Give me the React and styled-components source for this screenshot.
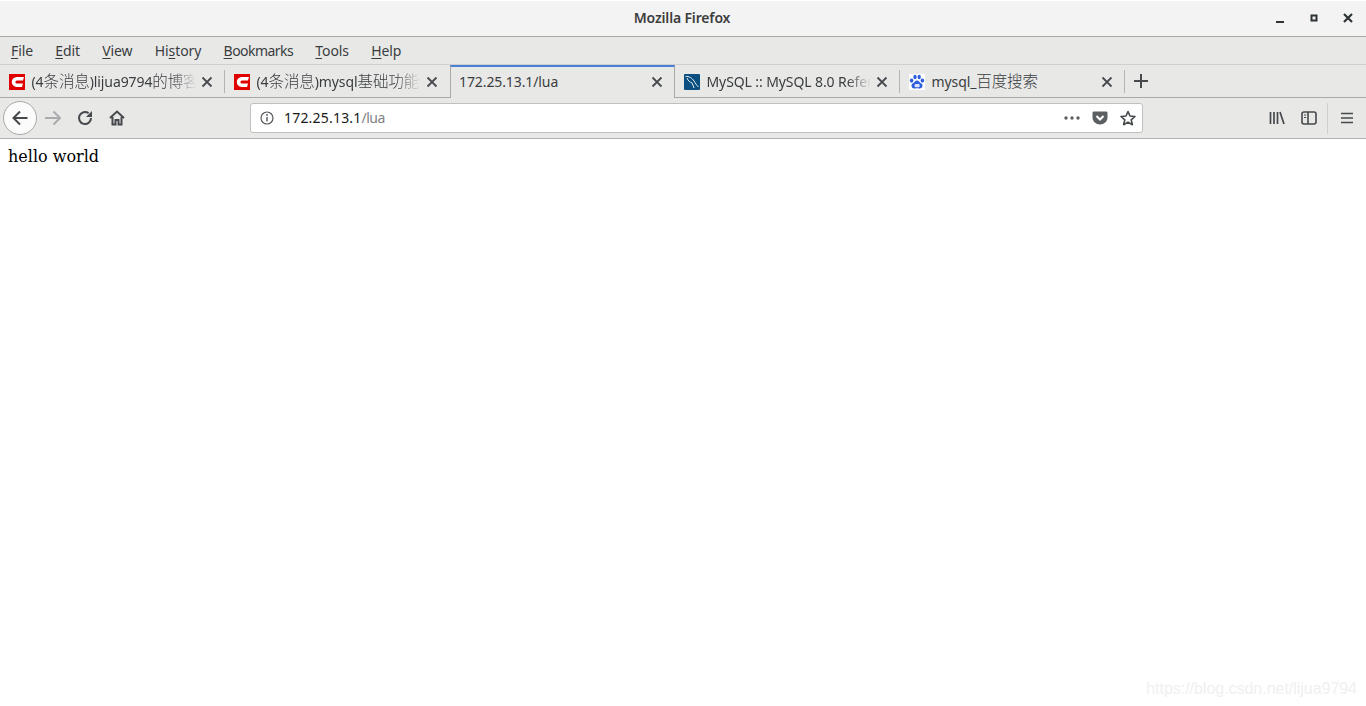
import styled, { createGlobalStyle } from 'styled-components';

const GlobalStyle = createGlobalStyle`
    html, body {
        margin: 0;
        padding: 0;
        height: 100%;
        background: #fff;
        overflow: hidden;
    }
    #root {
        height: 100%;
    }
`;

const uiFont = `"Noto Sans", "Noto Sans CJK SC", sans-serif`;

const Window = styled.div`
    display: flex;
    flex-direction: column;
    height: 706px;
    font-family: ${uiFont};
    color: #2e3436;
    position: relative;
`;

const TitleBar = styled.div`
    height: 36px;
    flex: none;
    box-sizing: border-box;
    border-top: 1px solid #fff;
    background: #f3f3f3;
    padding: 0 2px 2px 0;
    display: flex;
    align-items: center;
    justify-content: center;
    position: relative;
`;

const WindowTitle = styled.div`
    font-size: 14px;
    font-weight: 600;
    color: #3d3d3d;
    letter-spacing: -0.15px;
`;

const WindowButtons = styled.div`
    position: absolute;
    right: 1px;
    top: 0;
    height: 34px;
    display: flex;
`;

const WindowButton = styled.div`
    width: 34px;
    display: flex;
    align-items: center;
    justify-content: center;
`;

const MenuBar = styled.div`
    flex: none;
    height: 29px;
    box-sizing: border-box;
    background: #e8e8e7;
    border-top: 1px solid #a8a8a5;
    border-bottom: 1px solid #cfcfcd;
    display: flex;
    align-items: center;
    padding: 0 0 1px 11px;
    gap: 22.3px;
`;

const MenuItem = styled.div`
    font-size: 14px;
    color: #3a3d3f;
    letter-spacing: ${p => p.$tight ? '-0.55px' : '-0.1px'};
    u {
        text-underline-offset: 2px;
    }
`;

const TabStrip = styled.div`
    flex: none;
    height: 33px;
    box-sizing: border-box;
    background: #e8e8e7;
    border-bottom: 1px solid #a9a9a7;
    display: flex;
    align-items: stretch;
`;

const Tab = styled.div`
    width: 225px;
    box-sizing: border-box;
    display: flex;
    align-items: center;
    padding: 2px 10px 0 9px;
    position: relative;
    ${p => p.$active ? `
        height: 33px;
        padding: 0 9px 2px 8px;
        border-top: 2px solid #4a7fd6;
        border-left: 1px solid #a9a9a7;
        border-right: 1px solid #a9a9a7;
        background: #e8e8e7;
    ` : ''}
    ${p => p.$divider ? `
        &::after {
            content: '';
            position: absolute;
            right: 0;
            top: 5px;
            bottom: 4px;
            width: 1px;
            background: #b4b4b2;
        }
    ` : ''}
`;

const Favicon = styled.div`
    width: 16px;
    height: 16px;
    flex: none;
    margin-right: 6.5px;
    display: flex;
`;

const TabTitle = styled.div`
    flex: 1;
    min-width: 0;
    overflow: hidden;
    white-space: nowrap;
    font-size: 14px;
    line-height: 20px;
    color: #3a3d3f;
    letter-spacing: -0.1px;
    ${p => p.$fade ? `
        mask-image: linear-gradient(to right, #000 calc(100% - 24px), transparent 100%);
    ` : ''}
`;

const Cjk = styled.span`
    font-size: 15.5px;
    font-weight: 300;
    line-height: 1;
`;

const TabClose = styled.div`
    width: 16px;
    height: 16px;
    flex: none;
    display: flex;
    align-items: center;
    justify-content: center;
    margin-left: 3px;
`;

const NewTab = styled.div`
    width: 32px;
    display: flex;
    align-items: center;
    justify-content: center;
`;

const NavBar = styled.div`
    flex: none;
    height: 41px;
    box-sizing: border-box;
    background: #e8e8e7;
    border-bottom: 1px solid #b1b1af;
    display: flex;
    align-items: center;
    padding: 0 3px;
`;

const BackButton = styled.div`
    width: 32px;
    height: 32px;
    flex: none;
    border-radius: 50%;
    background: #fbfbfb;
    border: 1px solid #a9a9a7;
    display: flex;
    align-items: center;
    justify-content: center;
`;

const NavButton = styled.div`
    width: 32px;
    height: 32px;
    flex: none;
    display: flex;
    align-items: center;
    justify-content: center;
`;

const UrlBar = styled.div`
    width: 893px;
    height: 30px;
    flex: none;
    box-sizing: border-box;
    margin-left: 117px;
    background: #fff;
    border: 1px solid #c0c0be;
    border-radius: 3px;
    display: flex;
    align-items: center;
    padding: 0 0 0 9px;
`;

const Url = styled.div`
    flex: 1;
    margin-left: 10px;
    padding-bottom: 2px;
    font-size: 14px;
    color: #1a1a1a;
    letter-spacing: 0.2px;
    span {
        color: #808284;
        letter-spacing: -0.5px;
    }
`;

const UrlAction = styled.div`
    width: 28px;
    height: 24px;
    flex: none;
    display: flex;
    align-items: center;
    justify-content: center;
`;

const RightTools = styled.div`
    margin-left: auto;
    display: flex;
    align-items: center;
    height: 100%;
`;

const ToolButton = styled.div`
    width: 32px;
    height: 32px;
    display: flex;
    align-items: center;
    justify-content: center;
`;

const ToolDivider = styled.div`
    width: 1px;
    height: 31px;
    background: #d0d0ce;
    margin: 0 3px 0 2px;
`;

const Page = styled.div`
    flex: 1;
    background: #fff;
    padding: 8px;
    font-family: "DejaVu Serif", serif;
    font-size: 16px;
    line-height: 19px;
    color: #000;
`;

const Watermark = styled.div`
    position: absolute;
    right: 9px;
    bottom: 8px;
    font-family: "Liberation Sans", Arial, sans-serif;
    font-size: 16px;
    letter-spacing: -0.03px;
    color: #f0f0f0;
`;

const CloseIcon = () => (
    <svg width="12" height="12" viewBox="0 0 12 12">
        <path d="M1.5 1.5 L10.5 10.5 M10.5 1.5 L1.5 10.5" stroke="#474b4e" strokeWidth="1.8" />
    </svg>
);

const CsdnIcon = () => (
    <svg width="16" height="16" viewBox="0 0 16 16">
        <rect width="16" height="16" fill="#e00000" />
        <path d="M15 3 H8.5 C5 3 2.8 5.2 2.8 8 C2.8 10.8 5 13 8.5 13 H13 L14 9.6 H8.8 C7.2 9.6 6.4 9 6.4 8 C6.4 7 7.2 6.4 8.8 6.4 H14 Z" fill="#fff" />
    </svg>
);

const MysqlIcon = () => (
    <svg width="16" height="16" viewBox="0 0 16 16">
        <rect width="16" height="16" rx="1" fill="#0b4f80" />
        <path d="M1.5 2.5 C5 2 8 4 10 7 C11 9 12.5 11 14.5 13 M3 4 C4 7 6 8 8 9 C9 11 9.5 12.5 10 14" fill="none" stroke="#e6eef2" strokeWidth="1" />
    </svg>
);

const BaiduIcon = () => (
    <svg width="16" height="16" viewBox="0 0 16 16">
        <rect width="16" height="16" fill="#fff" />
        <g fill="#2f5fe0">
            <ellipse cx="2.6" cy="6.6" rx="1.8" ry="2.1" />
            <ellipse cx="6" cy="3" rx="1.7" ry="2.2" />
            <ellipse cx="10.2" cy="3" rx="1.7" ry="2.2" />
            <ellipse cx="13.4" cy="6.6" rx="1.8" ry="2.1" />
            <path d="M8 6.4 C10 6.4 10.6 8.4 12.4 9.6 C14.4 11 13.6 14.6 10.8 14.6 C9.6 14.6 9 14.2 8 14.2 C7 14.2 6.4 14.6 5.2 14.6 C2.4 14.6 1.6 11 3.6 9.6 C5.4 8.4 6 6.4 8 6.4 Z" />
        </g>
        <rect x="5.6" y="10" width="5" height="3.2" rx="1" fill="#dbe5fb" />
    </svg>
);

const tabs = [
    { id: 'blog', title: <>(4<Cjk>条消息</Cjk>)lijua9794<Cjk>的博客</Cjk> - CSDN</>, icon: <CsdnIcon />, fade: true, divider: true },
    { id: 'mysql', title: <>(4<Cjk>条消息</Cjk>)mysql<Cjk>基础功能</Cjk> - lijua</>, icon: <CsdnIcon />, fade: true },
    { id: 'lua', title: '172.25.13.1/lua', active: true },
    { id: 'manual', title: 'MySQL :: MySQL 8.0 Reference Manual', icon: <MysqlIcon />, fade: true, divider: true },
    { id: 'baidu', title: <>mysql_<Cjk>百度搜索</Cjk></>, icon: <BaiduIcon />, divider: true },
];

const menus = [
    ['F', 'ile'],
    ['E', 'dit'],
    ['V', 'iew'],
    ['Hi', 's', 'tory'],
    ['B', 'ookmarks'],
    ['T', 'ools'],
    ['H', 'elp'],
];

const App = () => {
    return (
        <>
            <GlobalStyle />
            <Window>
                <TitleBar>
                    <WindowTitle>Mozilla Firefox</WindowTitle>
                    <WindowButtons>
                        <WindowButton>
                            <svg width="12" height="12" viewBox="0 0 12 12">
                                <rect x="2" y="9" width="8" height="2" fill="#2e3436" />
                            </svg>
                        </WindowButton>
                        <WindowButton>
                            <svg width="12" height="12" viewBox="0 0 12 12">
                                <rect x="3.5" y="3.5" width="5" height="5" fill="none" stroke="#2e3436" strokeWidth="2" />
                            </svg>
                        </WindowButton>
                        <WindowButton>
                            <svg width="12" height="12" viewBox="0 0 12 12">
                                <path d="M2 2 L10 10 M10 2 L2 10" stroke="#2e3436" strokeWidth="2.2" />
                            </svg>
                        </WindowButton>
                    </WindowButtons>
                </TitleBar>

                <MenuBar>
                    {menus.map(parts => (
                        <MenuItem key={parts.join('')} $tight={parts[0] === 'B'}>
                            {parts.length === 2
                                ? <><u>{parts[0]}</u>{parts[1]}</>
                                : <>{parts[0]}<u>{parts[1]}</u>{parts[2]}</>}
                        </MenuItem>
                    ))}
                </MenuBar>

                <TabStrip>
                    {tabs.map(tab => (
                        <Tab key={tab.id} $active={tab.active} $divider={tab.divider}>
                            {tab.icon && <Favicon>{tab.icon}</Favicon>}
                            <TabTitle $fade={tab.fade}>{tab.title}</TabTitle>
                            <TabClose><CloseIcon /></TabClose>
                        </Tab>
                    ))}
                    <NewTab>
                        <svg width="16" height="16" viewBox="0 0 16 16">
                            <path d="M8 1 V15 M1 8 H15" stroke="#474b4e" strokeWidth="2" />
                        </svg>
                    </NewTab>
                </TabStrip>

                <NavBar>
                    <BackButton>
                        <svg width="18" height="18" viewBox="0 0 18 18">
                            <path d="M16.5 9 H2.5 M9 2.5 L2.5 9 L9 15.5" fill="none" stroke="#45494c" strokeWidth="2" />
                        </svg>
                    </BackButton>
                    <NavButton>
                        <svg width="18" height="18" viewBox="0 0 18 18">
                            <path d="M1 9 H15.5 M9.5 2.5 L16 9 L9.5 15.5" fill="none" stroke="#a9abad" strokeWidth="2" />
                        </svg>
                    </NavButton>
                    <NavButton>
                        <svg width="16" height="16" viewBox="0 0 16 16">
                            <path d="M14 8 A6 6 0 1 1 11.6 3.2" fill="none" stroke="#45494c" strokeWidth="2" />
                            <path d="M15 1 V7 H9 Z" fill="#45494c" />
                        </svg>
                    </NavButton>
                    <NavButton>
                        <svg width="16" height="16" viewBox="0 0 16 16">
                            <path d="M1 8 L8 1.5 L15 8 M3.5 7 V14.5 H6.5 V10 H9.5 V14.5 H12.5 V7" fill="none" stroke="#45494c" strokeWidth="2" />
                        </svg>
                    </NavButton>

                    <UrlBar>
                        <svg width="14" height="14" viewBox="0 0 14 14">
                            <circle cx="7" cy="7" r="6" fill="none" stroke="#55595c" strokeWidth="1.2" />
                            <path d="M7 6 V10.5" stroke="#55595c" strokeWidth="1.4" />
                            <circle cx="7" cy="4" r="0.9" fill="#55595c" />
                        </svg>
                        <Url>172.25.13.1<span>/lua</span></Url>
                        <UrlAction>
                            <svg width="16" height="4" viewBox="0 0 16 4">
                                <circle cx="2" cy="2" r="1.7" fill="#5b5f62" />
                                <circle cx="8" cy="2" r="1.7" fill="#5b5f62" />
                                <circle cx="14" cy="2" r="1.7" fill="#5b5f62" />
                            </svg>
                        </UrlAction>
                        <UrlAction>
                            <svg width="16" height="16" viewBox="0 0 16 16">
                                <path d="M1.8 1.5 H14.2 Q15.5 1.5 15.5 2.8 V7.5 C15.5 11.5 12 14.5 8 14.5 C4 14.5 0.5 11.5 0.5 7.5 V2.8 Q0.5 1.5 1.8 1.5 Z" fill="#5b5f62" />
                                <path d="M4.5 6 L8 9.5 L11.5 6" fill="none" stroke="#fff" strokeWidth="2" />
                            </svg>
                        </UrlAction>
                        <UrlAction>
                            <svg width="16" height="16" viewBox="0 0 16 16">
                                <path d="M8 1.5 L10 6 L15 6.5 L11.2 9.8 L12.3 14.7 L8 12.1 L3.7 14.7 L4.8 9.8 L1 6.5 L6 6 Z" fill="none" stroke="#45494c" strokeWidth="1.6" strokeLinejoin="round" />
                            </svg>
                        </UrlAction>
                    </UrlBar>

                    <RightTools>
                        <ToolButton>
                            <svg width="16" height="14" viewBox="0 0 16 14">
                                <path d="M1.5 1 V13 M5 1 V13 M8.5 1 V13 M11 1 L15 13" stroke="#45494c" strokeWidth="1.7" />
                            </svg>
                        </ToolButton>
                        <ToolButton>
                            <svg width="16" height="14" viewBox="0 0 16 14">
                                <rect x="1" y="1" width="14" height="12" rx="2" fill="none" stroke="#45494c" strokeWidth="1.6" />
                                <path d="M7 1 V13" stroke="#45494c" strokeWidth="1.6" />
                                <path d="M3 4 H5.2 M3 6.5 H5.2" stroke="#45494c" strokeWidth="1" />
                            </svg>
                        </ToolButton>
                        <ToolDivider />
                        <ToolButton>
                            <svg width="14" height="12" viewBox="0 0 14 12">
                                <path d="M1 1.5 H13 M1 6 H13 M1 10.5 H13" stroke="#45494c" strokeWidth="1.7" />
                            </svg>
                        </ToolButton>
                    </RightTools>
                </NavBar>

                <Page>hello world</Page>
                <Watermark>https://blog.csdn.net/lijua9794</Watermark>
            </Window>
        </>
    );
};

export default App;
